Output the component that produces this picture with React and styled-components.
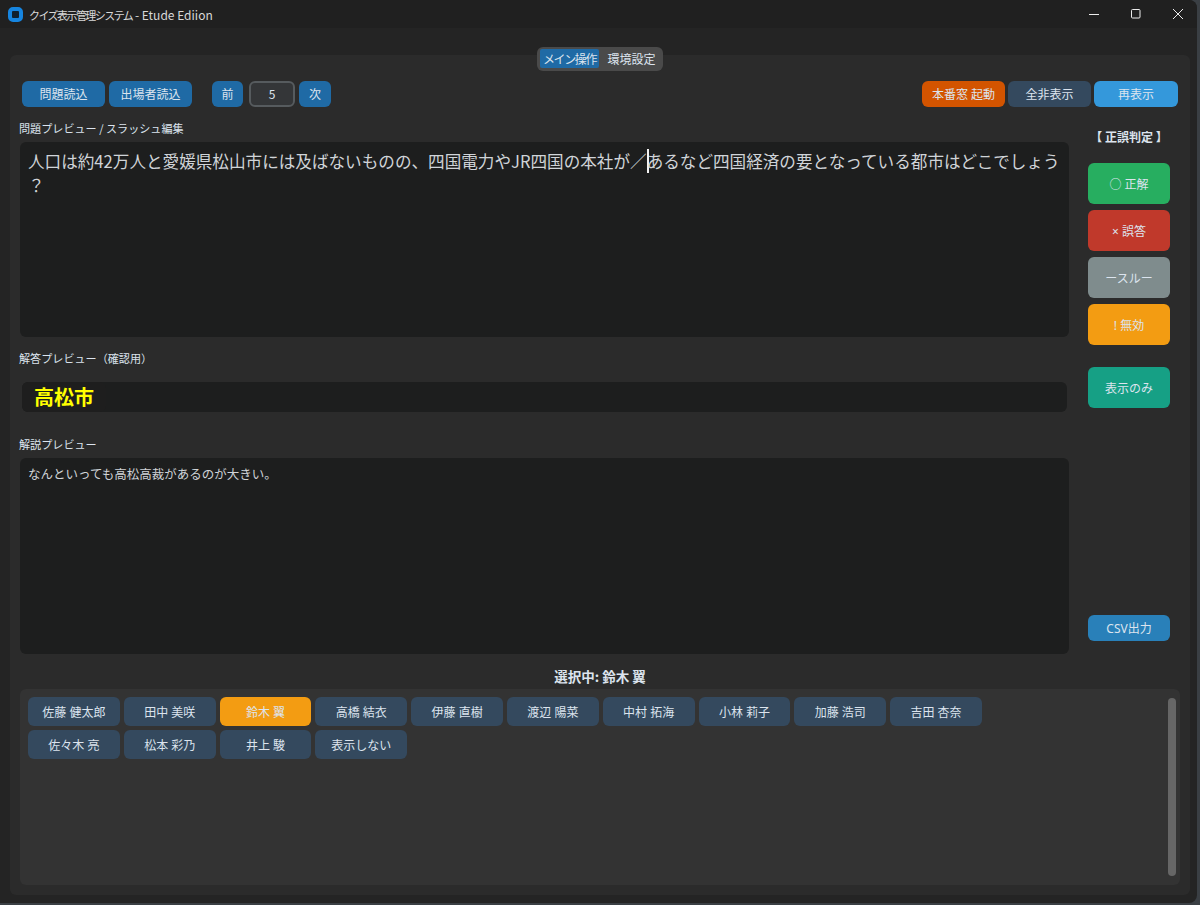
import React from "react";
import styled, { createGlobalStyle } from "styled-components";

const players = [
  "佐藤 健太郎", "田中 美咲", "鈴木 翼", "高橋 結衣", "伊藤 直樹", "渡辺 陽菜", "中村 拓海",
  "小林 莉子", "加藤 浩司", "吉田 杏奈", "佐々木 亮", "松本 彩乃", "井上 駿", "表示しない",
];

const verdicts = [
  { label: "○ 正解", color: "#27ae60" },
  { label: "× 誤答", color: "#c0392b" },
  { label: "ースルー", color: "#7f8c8d" },
  { label: "! 無効", color: "#f39c12" },
];

const GlobalStyle = createGlobalStyle`
  html, body {
    margin: 0;
    padding: 0;
    background: #3a3f44;
  }
  body {
    font-family: "Noto Sans CJK JP", "Noto Sans", sans-serif;
    font-size: 12px;
    color: #dce4ee;
  }
`;

const Window = styled.div`
  width: 1197px;
  height: 903px;
  background: #242424;
  border-radius: 0 8px 8px 0;
  overflow: hidden;
  display: flex;
  flex-direction: column;
`;

const TitleBar = styled.div`
  height: 28px;
  flex: none;
  display: flex;
  align-items: center;
  background: #202020;
  padding-left: 8px;
`;

const AppIcon = styled.div`
  width: 7px;
  height: 7px;
  border: 4px solid #1685e0;
  border-radius: 5px;
  background: #10202e;
  margin-right: 6px;
`;

const Title = styled.div`
  flex: 1;
  font-size: 12px;
  color: #d8d8d8;
`;

const TitleJa = styled.span`
  font-size: 11px;
  letter-spacing: -1.55px;
`;

const WinControl = styled.div`
  width: 42px;
  height: 28px;
  box-sizing: border-box;
  padding-left: 4px;
  display: flex;
  align-items: center;
  justify-content: center;
  color: #ececec;
`;

const Body = styled.div`
  flex: 1;
  position: relative;
  padding: 27px 7px 8px 10px;
  display: flex;
  min-height: 0;
`;

const Tabs = styled.div`
  position: absolute;
  top: 19px;
  left: 537px;
  height: 24px;
  box-sizing: border-box;
  padding: 2px 3px;
  display: flex;
  background: #4a4a4a;
  border-radius: 6px;
`;

const Tab = styled.div`
  height: 19px;
  width: ${(p) => (p.$active ? 59 : 61)}px;
  box-sizing: border-box;
  padding-left: ${(p) => (p.$active ? 0 : 4)}px;
  line-height: 19px;
  font-size: 12px;
  text-align: center;
  letter-spacing: ${(p) => (p.$active ? "-1.4px" : "0")};
  border-radius: 2px;
  background: ${(p) => (p.$active ? "#1f6aa5" : "transparent")};
`;

const Panel = styled.div`
  flex: 1;
  background: #2b2b2b;
  border-radius: 6px;
  padding: 26px 10px 10px;
  display: flex;
  flex-direction: column;
`;

const Toolbar = styled.div`
  display: flex;
  padding: 0 2px;
  margin-bottom: 13px;
`;

const Group = styled.div`
  display: flex;
  gap: ${(p) => p.$gap || 4}px;
  margin-left: ${(p) => p.$left || 0}px;
`;

const Spacer = styled.div`
  flex: 1;
`;

const Button = styled.button`
  width: ${(p) => p.$w || 83}px;
  height: ${(p) => p.$h || 26}px;
  flex: none;
  padding: 0;
  border: none;
  border-radius: 6px;
  background: ${(p) => p.$bg || "#1f6aa5"};
  color: #dce4ee;
  font: 12px "Noto Sans", "Noto Sans CJK JP", sans-serif;
`;

const NumberBox = styled.div`
  width: 46px;
  height: 26px;
  margin: 0 1px 0 3px;
  box-sizing: border-box;
  border: 2px solid #565b5e;
  border-radius: 6px;
  background: #343638;
  font-size: 12px;
  line-height: 22px;
  text-align: center;
`;

const Workspace = styled.div`
  display: flex;
  gap: 19px;
`;

const Previews = styled.div`
  width: 1049px;
  display: flex;
  flex-direction: column;
`;

const Label = styled.div`
  height: 16px;
  line-height: 16px;
  font-size: 11.1px;
  margin-left: -1px;
  margin-bottom: ${(p) => p.$below || 6}px;
`;

const TextBox = styled.div`
  height: ${(p) => p.$h}px;
  box-sizing: border-box;
  background: #1d1e1e;
  border-radius: 6px;
  margin-bottom: 13px;
`;

const QuestionBox = styled(TextBox)`
  padding: 7px 0 7px 8px;
  font-size: 16.6px;
  line-height: 24px;
  color: #d0d4d8;
`;

const Caret = styled.span`
  display: inline-block;
  width: 0;
  height: 24px;
  vertical-align: top;
  border-left: 2px solid #f2f2f2;
  margin-right: -2px;
`;

const AnswerBox = styled(TextBox)`
  margin: 0 2px 24px;
  display: flex;
`;

const AnswerText = styled.div`
  padding: 0 12px;
  font-size: 20px;
  font-weight: 700;
  line-height: 30px;
  color: #ffff00;
  background: #1e1e1e;
  border-radius: 6px;
`;

const NoteBox = styled(TextBox)`
  padding: 7px 8px;
  font-size: 12.5px;
  line-height: 18px;
  color: #d0d4d8;
  margin-bottom: 14px;
`;

const Side = styled.div`
  width: 82px;
  display: flex;
  flex-direction: column;
  gap: 6px;
  padding: 9px 0 27px;
`;

const SideTitle = styled.div`
  height: 16px;
  line-height: 16px;
  margin: 0 -4px 12px;
  font-size: 12px;
  font-weight: 700;
  text-align: center;
  white-space: nowrap;
`;

const DisplayOnly = styled(Button)`
  margin-top: 16px;
`;

const SelectedLabel = styled.div`
  height: 16px;
  line-height: 16px;
  margin-bottom: 5px;
  font-size: 13.5px;
  font-weight: 700;
  text-align: center;
`;

const PlayerPanel = styled.div`
  flex: 1;
  display: flex;
  background: #333333;
  border-radius: 6px;
  padding: 8px 4px 9px 8px;
`;

const PlayerGrid = styled.div`
  flex: 1;
  display: grid;
  grid-template-columns: repeat(10, 91.8px);
  grid-auto-rows: 29px;
  gap: 4px;
`;

const PlayerButton = styled(Button)`
  width: 100%;
`;

const Scrollbar = styled.div`
  width: 8px;
  margin-top: 1px;
  background: #666666;
  border-radius: 4px;
`;

export default function App() {
  return (
    <>
      <GlobalStyle />
      <Window>
        <TitleBar>
          <AppIcon />
          <Title><TitleJa>クイズ表示管理システム</TitleJa> - Etude Ediion</Title>
          <WinControl>
            <svg width="12" height="12" viewBox="0 0 12 12"><path d="M1 6.5h10" stroke="currentColor" fill="none" /></svg>
          </WinControl>
          <WinControl>
            <svg width="12" height="12" viewBox="0 0 12 12"><rect x="1.5" y="1.5" width="8.5" height="8.5" rx="1" stroke="currentColor" fill="none" /></svg>
          </WinControl>
          <WinControl>
            <svg width="12" height="12" viewBox="0 0 12 12"><path d="M1 1l10 10M11 1L1 11" stroke="currentColor" fill="none" /></svg>
          </WinControl>
        </TitleBar>
        <Body>
          <Tabs>
            <Tab $active>メイン操作</Tab>
            <Tab>環境設定</Tab>
          </Tabs>
          <Panel>
            <Toolbar>
              <Group>
                <Button>問題読込</Button>
                <Button>出場者読込</Button>
              </Group>
              <Group $left={20} $gap={3}>
                <Button $w={31}>前</Button>
                <NumberBox>5</NumberBox>
                <Button $w={32}>次</Button>
              </Group>
              <Spacer />
              <Group $gap={3}>
                <Button $bg="#d35400">本番窓 起動</Button>
                <Button $bg="#34495e">全非表示</Button>
                <Button $w={84} $bg="#3498db">再表示</Button>
              </Group>
            </Toolbar>
            <Workspace>
              <Previews>
                <Label>問題プレビュー / スラッシュ編集</Label>
                <QuestionBox $h={195}>
                  人口は約42万人と愛媛県松山市には及ばないものの、四国電力やJR四国の本社が／<Caret />あるなど四国経済の要となっている都市はどこでしょう<br />？
                </QuestionBox>
                <Label $below={16}>解答プレビュー（確認用）</Label>
                <AnswerBox $h={30}>
                  <AnswerText>高松市</AnswerText>
                </AnswerBox>
                <Label>解説プレビュー</Label>
                <NoteBox $h={196}>なんといっても高松高裁があるのが大きい。</NoteBox>
              </Previews>
              <Side>
                <SideTitle>【 正誤判定 】</SideTitle>
                {verdicts.map((v) => (
                  <Button key={v.label} $w={82} $h={41} $bg={v.color}>{v.label}</Button>
                ))}
                <DisplayOnly $w={82} $h={41} $bg="#16a085">表示のみ</DisplayOnly>
                <Spacer />
                <Button $w={82} $h={26} $bg="#2980b9">CSV出力</Button>
              </Side>
            </Workspace>
            <SelectedLabel>選択中: 鈴木 翼</SelectedLabel>
            <PlayerPanel>
              <PlayerGrid>
                {players.map((name) => (
                  <PlayerButton key={name} $h={29} $bg={name === "鈴木 翼" ? "#f39c12" : "#34495e"}>{name}</PlayerButton>
                ))}
              </PlayerGrid>
              <Scrollbar />
            </PlayerPanel>
          </Panel>
        </Body>
      </Window>
    </>
  );
}
